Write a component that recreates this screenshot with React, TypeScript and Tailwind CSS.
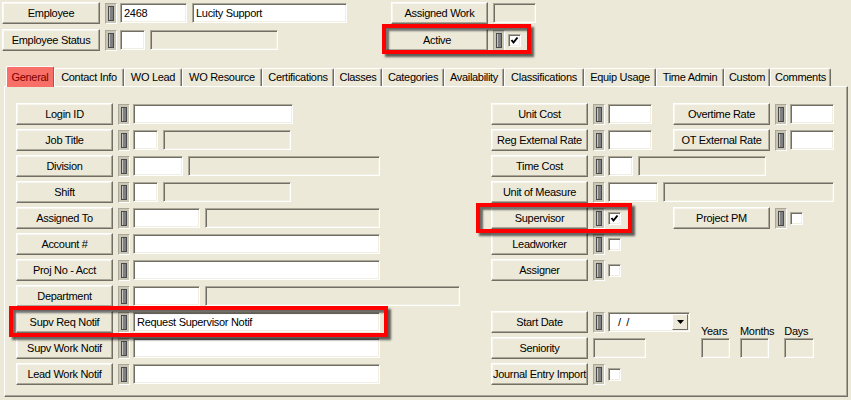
import React from "react";

const font = { fontFamily: '"Liberation Sans", Arial, sans-serif', letterSpacing: "-0.3px" };

// raised 3d button, XP classic look
function Btn({ label, w = 97 }: { label: string; w?: number }) {
  return (
    <div
      className="h-[22px] shrink-0 flex items-center justify-center text-[11px] leading-none text-black bg-[#ece9d8] border border-t-white border-l-white border-r-[#716f64] border-b-[#716f64] shadow-[inset_-1px_-1px_0_#aca899,inset_1px_1px_0_#f7f6f0] whitespace-nowrap"
      style={{ width: w }}
    >
      {label}
    </div>
  );
}

// little grey record indicator next to each label
function Ind() {
  return (
    <div className="ml-[5px] w-[12px] h-[21px] shrink-0 p-[2px] bg-[#c9c6b6] border border-t-[#aca899] border-l-[#aca899] border-r-white border-b-white">
      <div className="w-full h-full bg-[#808080] border border-[#4a4a4a] shadow-[inset_1px_0_0_#c8c8c8]" />
    </div>
  );
}

function Field({ w, value, gray, ml = 5 }: { w: number; value?: string; gray?: boolean; ml?: number }) {
  return (
    <div
      className={
        "h-[20px] shrink-0 flex items-center pl-[3px] text-[11px] text-black whitespace-nowrap overflow-hidden border border-t-[#aca899] border-l-[#aca899] border-r-white border-b-white shadow-[inset_1px_1px_0_#716f64,inset_-1px_-1px_0_#f1efe2] " +
        (gray ? "bg-[#ece9d8]" : "bg-white")
      }
      style={{ width: w, marginLeft: ml }}
    >
      {value}
    </div>
  );
}

function Check({ checked }: { checked?: boolean }) {
  return (
    <div className="ml-[3px] w-[13px] h-[13px] shrink-0 bg-white border border-t-[#aca899] border-l-[#aca899] border-r-white border-b-white shadow-[inset_1px_1px_0_#716f64,inset_-1px_-1px_0_#f1efe2] flex items-center justify-center">
      {checked && (
        <svg width="9" height="9" viewBox="0 0 9 9">
          <path d="M1.5 4 L3.5 6.5 L7.5 1.5" stroke="black" strokeWidth="2" fill="none" />
        </svg>
      )}
    </div>
  );
}

function Combo() {
  return (
    <div className="ml-[3px] w-[82px] h-[20px] shrink-0 flex bg-white border border-t-[#aca899] border-l-[#aca899] border-r-white border-b-white shadow-[inset_1px_1px_0_#716f64,inset_-1px_-1px_0_#f1efe2]">
      <div className="flex-1 pl-[9px] text-[11px] leading-[18px] text-black whitespace-pre">/  /</div>
      <div className="w-[16px] h-[16px] mt-[1px] mr-[1px] flex items-center justify-center bg-[#ece9d8] border border-t-white border-l-white border-r-[#716f64] border-b-[#716f64]">
        <svg width="7" height="4" viewBox="0 0 7 4">
          <path d="M0 0 H7 L3.5 4 Z" fill="black" />
        </svg>
      </div>
    </div>
  );
}

function Row({ children }: { children: React.ReactNode }) {
  return <div className="h-[22px] flex items-center">{children}</div>;
}

const leftRows: { label: string; fields: { w: number; gray?: boolean; value?: string }[] }[] = [
  { label: "Login ID", fields: [{ w: 160 }] },
  { label: "Job Title", fields: [{ w: 25 }, { w: 128, gray: true }] },
  { label: "Division", fields: [{ w: 50 }, { w: 192, gray: true }] },
  { label: "Shift", fields: [{ w: 25 }, { w: 128, gray: true }] },
  { label: "Assigned To", fields: [{ w: 67 }, { w: 175, gray: true }] },
  { label: "Account #", fields: [{ w: 247 }] },
  { label: "Proj No - Acct", fields: [{ w: 247 }] },
  { label: "Department", fields: [{ w: 67 }, { w: 255, gray: true }] },
  { label: "Supv Req Notif", fields: [{ w: 247, value: "Request Supervisor Notif" }] },
  { label: "Supv Work Notif", fields: [{ w: 247 }] },
  { label: "Lead Work Notif", fields: [{ w: 247 }] },
];

const tabs: [string, number][] = [
  ["General", 48],
  ["Contact Info", 70],
  ["WO Lead", 58],
  ["WO Resource", 80],
  ["Certifications", 72],
  ["Classes", 48],
  ["Categories", 62],
  ["Availability", 60],
  ["Classifications", 80],
  ["Equip Usage", 72],
  ["Time Admin", 68],
  ["Custom", 46],
  ["Comments", 61],
];

function Highlight({ x, y, w, h }: { x: number; y: number; w: number; h: number }) {
  return (
    <div
      className="absolute border-4 border-[#ff0000] shadow-[3px_3px_2px_rgba(0,0,0,0.6),inset_3px_3px_2px_rgba(0,0,0,0.55)] pointer-events-none"
      style={{ left: x, top: y, width: w, height: h }}
    />
  );
}

export default function App() {
  return (
    <div className="relative w-[851px] h-[400px] bg-[#ece9d8] overflow-hidden" style={font}>
      {/* Header */}
      <div className="pt-[2px] pl-[2px] flex flex-col gap-[5px]">
        <Row>
          <Btn label="Employee" w={98} />
          <Ind />
          <Field w={67} value="2468" ml={3} />
          <Field w={155} value="Lucity Support" />
          <div className="ml-[44px]">
            <Btn label="Assigned Work" />
          </div>
          <Field w={43} gray />
        </Row>
        <Row>
          <Btn label="Employee Status" w={98} />
          <Ind />
          <Field w={25} ml={3} />
          <Field w={128} gray />
          <div className="ml-[108px]">
            <Btn label="Active" w={102} />
          </div>
          <Ind />
          <Check checked />
        </Row>
      </div>

      {/* Tabs */}
      <div className="mt-[14px] ml-[6px] h-[21px] flex items-end relative z-10">
        {tabs.map(([t, w], i) =>
          i === 0 ? (
            <div
              key={t}
              className="h-[21px] -mb-px flex items-center justify-center text-[11px] text-[#7a0000] bg-[#f76f67] border border-t-white border-l-white border-r-[#716f64] border-b-0 rounded-t-[2px]"
              style={{ width: w }}
            >
              {t}
            </div>
          ) : (
            <div
              key={t}
              className="h-[18px] flex items-center justify-center text-[11px] text-black bg-[#ece9d8] border border-t-white border-l-white border-r-[#716f64] border-b-0 rounded-t-[2px] shadow-[inset_-1px_0_0_#aca899] whitespace-nowrap"
              style={{ width: w }}
            >
              {t}
            </div>
          )
        )}
      </div>

      {/* Tab panel */}
      <div className="ml-[4px] w-[844px] h-[311px] border border-t-white border-l-white border-r-[#716f64] border-b-[#716f64] shadow-[inset_-1px_-1px_0_#aca899] pt-[16px] pl-[11px] flex">
        {/* Left column */}
        <div className="w-[475px] flex flex-col gap-[4px]">
          {leftRows.map((r) => (
            <Row key={r.label}>
              <Btn label={r.label} />
              <Ind />
              {r.fields.map((f, i) => (
                <Field key={i} w={f.w} gray={f.gray} value={f.value} ml={i === 0 ? 3 : 5} />
              ))}
            </Row>
          ))}
        </div>

        {/* Right column */}
        <div className="flex flex-col gap-[4px]">
          <Row>
            <div className="w-[182px] flex items-center">
              <Btn label="Unit Cost" />
              <Ind />
              <Field w={44} ml={3} />
            </div>
            <Btn label="Overtime Rate" />
            <Ind />
            <Field w={44} ml={3} />
          </Row>
          <Row>
            <div className="w-[182px] flex items-center">
              <Btn label="Reg External Rate" />
              <Ind />
              <Field w={44} ml={3} />
            </div>
            <Btn label="OT External Rate" />
            <Ind />
            <Field w={44} ml={3} />
          </Row>
          <Row>
            <Btn label="Time Cost" />
            <Ind />
            <Field w={25} ml={3} />
            <Field w={128} gray />
          </Row>
          <Row>
            <Btn label="Unit of Measure" />
            <Ind />
            <Field w={50} ml={3} />
            <Field w={171} gray />
          </Row>
          <Row>
            <div className="w-[182px] flex items-center">
              <Btn label="Supervisor" />
              <Ind />
              <Check checked />
            </div>
            <Btn label="Project PM" />
            <Ind />
            <Check />
          </Row>
          <Row>
            <Btn label="Leadworker" />
            <Ind />
            <Check />
          </Row>
          <Row>
            <Btn label="Assigner" />
            <Ind />
            <Check />
          </Row>
          <Row>{null}</Row>
          <div className="flex">
            <div className="w-[210px] flex flex-col gap-[4px]">
              <Row>
                <Btn label="Start Date" />
                <Ind />
                <Combo />
              </Row>
              <Row>
                <Btn label="Seniority" />
                <Field w={53} gray />
              </Row>
            </div>
            <div className="flex gap-[10px] pt-[14px]">
              {["Years", "Months", "Days"].map((l) => (
                <div key={l} className="flex flex-col items-start">
                  <div className="text-[11px] leading-[13px] text-black">{l}</div>
                  <Field w={l === "Days" ? 30 : 29} gray ml={0} />
                </div>
              ))}
            </div>
          </div>
          <Row>
            <Btn label="Journal Entry Import" />
            <Ind />
            <Check />
          </Row>
        </div>
      </div>

      <Highlight x={382} y={24} w={149} h={30} />
      <Highlight x={476} y={203} w={156} h={30} />
      <Highlight x={9} y={306} w={379} h={31} />
    </div>
  );
}
